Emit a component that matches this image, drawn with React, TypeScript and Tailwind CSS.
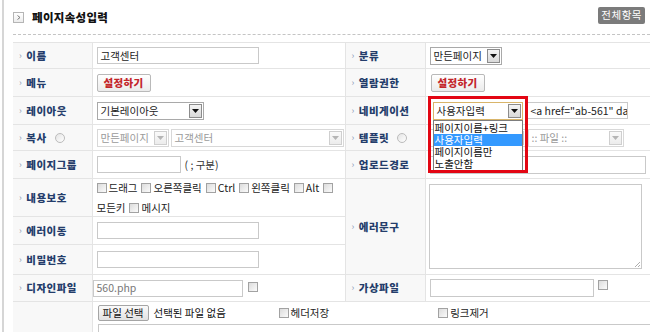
import React from "react";

const FONT = "font-['Noto_Sans_CJK_KR','Noto_Sans',sans-serif]";

function Label({
  children,
  extra,
  rowSpan,
}: {
  children?: React.ReactNode;
  extra?: React.ReactNode;
  rowSpan?: number;
}) {
  return (
    <td rowSpan={rowSpan} className="bg-[#f8f8f8] border-b border-r border-[#e4e4e4] pl-[6px] align-middle">
      {children ? (
        <div className="flex items-center text-[10.5px] leading-[14px] font-extrabold text-[#243d6b] tracking-[0.5px] whitespace-nowrap">
          <span className="text-[#8a98b5] text-[9px] mr-[4px] font-normal">›</span>
          {children}
          {extra}
        </div>
      ) : null}
    </td>
  );
}

function Value({ children, className }: { children?: React.ReactNode; className?: string }) {
  return (
    <td className={"border-b border-r border-[#e4e4e4] align-middle " + (className ?? "pl-[4px]")}>
      {children}
    </td>
  );
}

function Arrow({ disabled }: { disabled?: boolean }) {
  return (
    <span
      className={
        "shrink-0 w-[13px] h-[14px] mr-[1px] flex items-center justify-center border " +
        (disabled
          ? "border-[#cfcfcf] bg-gradient-to-b from-[#fafafa] to-[#ececec]"
          : "border-[#8c8c8c] bg-gradient-to-b from-[#f4f4f4] to-[#d9d9d9]")
      }
    >
      <svg width="7" height="4" viewBox="0 0 7 4">
        <path d="M0 0h7L3.5 4z" fill={disabled ? "#b5b5b5" : "#111"} />
      </svg>
    </span>
  );
}

function Select({
  text,
  className,
  disabled,
  focused,
}: {
  text: string;
  className: string;
  disabled?: boolean;
  focused?: boolean;
}) {
  return (
    <div
      className={
        "h-[18px] flex items-center bg-white border " +
        (focused ? "border-[#d9b56a] " : disabled ? "border-[#d8d8d8] " : "border-[#a9a9a9] ") +
        className
      }
    >
      <span
        className={
          "flex-1 pl-[3px] text-[10.5px] leading-[14px] whitespace-nowrap overflow-hidden " +
          (disabled ? "text-[#9a9a9a]" : "text-[#222]")
        }
      >
        {text}
      </span>
      <Arrow disabled={disabled} />
    </div>
  );
}

function Input({ className, text, gray }: { className: string; text?: string; gray?: boolean }) {
  return (
    <div
      className={
        "h-[17px] flex items-center bg-white border border-[#c9c9c9] pl-[3px] overflow-hidden whitespace-nowrap text-[10.5px] leading-[14px] " +
        (gray ? "text-[#777] " : "text-[#222] ") +
        className
      }
    >
      {text}
    </div>
  );
}

function Check() {
  return (
    <span className="block shrink-0 w-[10px] h-[10px] border border-[#a2a2a2] bg-gradient-to-br from-[#dcdcdc] to-[#fbfbfb]" />
  );
}

function Radio() {
  return (
    <span className="block shrink-0 w-[10px] h-[10px] rounded-full border border-[#bcbcbc] bg-gradient-to-br from-[#e4e4e4] to-[#ffffff] ml-[8px]" />
  );
}

function CheckItem({ text }: { text: string }) {
  return (
    <span className="inline-flex items-center gap-[2px] mr-[4px] text-[10.5px] leading-[14px] text-[#222] whitespace-nowrap">
      <Check />
      {text}
    </span>
  );
}

function SetButton() {
  return (
    <div className="w-[54px] h-[18px] flex items-center justify-center border border-[#b9b9b9] rounded-[2px] bg-gradient-to-b from-white to-[#ebebeb] text-[10.5px] leading-[14px] font-extrabold text-[#c3262b] tracking-[0.3px]">
      설정하기
    </div>
  );
}

export default function App() {
  return (
    <div className={"w-[650px] h-[332px] overflow-hidden bg-white flex " + FONT}>
      <div className="w-[2px] shrink-0 ml-[2px] bg-[#d6d6d6]" />
      <div className="flex-1 min-w-0 pl-[9px]">
        {/* header */}
        <div className="h-[35px] flex items-center justify-between border-b border-dashed border-[#c4c4c4] pr-[5px]">
          <div className="flex items-center gap-[8px] pt-[1px]">
            <span className="w-[11px] h-[11px] border border-[#b5b5b5] bg-gradient-to-b from-white to-[#ececec] flex items-center justify-center">
              <svg width="4" height="5" viewBox="0 0 4 5">
                <path d="M0.5 0.5L3 2.5L0.5 4.5" stroke="#777" strokeWidth="1" fill="none" />
              </svg>
            </span>
            <span className="text-[11.5px] font-extrabold text-[#111] tracking-[0.3px]">페이지속성입력</span>
          </div>
          <div className="h-[17px] px-[3px] mb-[4px] flex items-center bg-[#7b7b7b] rounded-[2px] text-[10.5px] leading-[14px] text-white tracking-[0.5px]">
            전체항목
          </div>
        </div>

        <table className="mt-[7px] border-collapse table-fixed w-[640px] border-t border-[#e4e4e4]">
          <colgroup>
            <col className="w-[79px]" />
            <col className="w-[253px]" />
            <col className="w-[80px]" />
            <col className="w-[228px]" />
          </colgroup>
          <tbody>
            <tr className="h-[26px]">
              <Label>이름</Label>
              <Value>
                <Input className="w-[162px]" text="고객센터" />
              </Value>
              <Label>분류</Label>
              <Value>
                <Select text="만든페이지" className="w-[72px]" />
              </Value>
            </tr>
            <tr className="h-[28px]">
              <Label>메뉴</Label>
              <Value>
                <SetButton />
              </Value>
              <Label>열람권한</Label>
              <Value className="pl-[5px]">
                <SetButton />
              </Value>
            </tr>
            <tr className="h-[28px]">
              <Label>레이아웃</Label>
              <Value>
                <Select text="기본레이아웃" className="w-[107px]" />
              </Value>
              <Label>네비게이션</Label>
              <Value className="pl-[2px]">
                <div className="flex items-center">
                  <div className="relative w-[100px] h-[22px] flex items-center justify-center">
                    <Select text="사용자입력" className="w-[90px]" focused />
                    {/* open list */}
                    <div className="absolute left-[5px] top-[20px] w-[90px] bg-white border border-[#7d7d7d] z-10 py-[1px]">
                      <div className="h-[12px] pl-[1px] text-[10.5px] leading-[12px] text-[#111] whitespace-nowrap">페이지이름+링크</div>
                      <div className="h-[12px] pl-[1px] text-[10.5px] leading-[12px] text-white bg-[#3399ff] whitespace-nowrap">사용자입력</div>
                      <div className="h-[12px] pl-[1px] text-[10.5px] leading-[12px] text-[#111] whitespace-nowrap">페이지이름만</div>
                      <div className="h-[12px] pl-[1px] text-[10.5px] leading-[12px] text-[#111] whitespace-nowrap">노출안함</div>
                    </div>
                    {/* red highlight */}
                    <div className="absolute left-0 top-[-4px] w-[100px] h-[77px] border-[3px] border-[#e30613] z-20 pointer-events-none" />
                  </div>
                  <Input className="w-[101px] ml-[-1px]" text={'<a href="ab-561" dat'} />
                </div>
              </Value>
            </tr>
            <tr className="h-[26px]">
              <Label extra={<Radio />}>복사</Label>
              <Value>
                <div className="flex items-center gap-[2px]">
                  <Select text="만든페이지" className="w-[72px]" disabled />
                  <Select text="고객센터" className="w-[173px]" disabled />
                </div>
              </Value>
              <Label extra={<Radio />}>템플릿</Label>
              <Value>
                <div className="flex items-center gap-[2px]">
                  <Select text="" className="w-[96px]" disabled />
                  <Select text=":: 파일 ::" className="w-[96px]" disabled />
                </div>
              </Value>
            </tr>
            <tr className="h-[28px]">
              <Label>페이지그룹</Label>
              <Value>
                <div className="flex items-center gap-[4px]">
                  <Input className="w-[84px]" />
                  <span className="text-[10.5px] text-[#333] leading-[14px]">( ; 구분)</span>
                </div>
              </Value>
              <Label>업로드경로</Label>
              <Value>
                <Input className="w-[216px] h-[18px]" />
              </Value>
            </tr>
            <tr className="h-[38px]">
              <Label>내용보호</Label>
              <Value>
                <div className="flex flex-wrap items-center gap-y-[3px]">
                  <CheckItem text="드래그" />
                  <CheckItem text="오른쪽클릭" />
                  <CheckItem text="Ctrl" />
                  <CheckItem text="왼쪽클릭" />
                  <CheckItem text="Alt" />
                  <Check />
                  <span className="w-full h-0" />
                  <span className="text-[10.5px] leading-[14px] text-[#222] mr-[4px]">모든키</span>
                  <CheckItem text="메시지" />
                </div>
              </Value>
              <Label rowSpan={3}>에러문구</Label>
              <td rowSpan={3} className="border-b border-[#e4e4e4] pl-[3px] align-middle">
                <div className="relative w-[213px] h-[85px] border border-[#c9c9c9] bg-white">
                  <svg className="absolute right-[1px] bottom-[1px]" width="6" height="6" viewBox="0 0 6 6">
                    <path d="M1 6L6 1M4 6L6 4" stroke="#999" strokeWidth="0.8" />
                  </svg>
                </div>
              </td>
            </tr>
            <tr className="h-[28px]">
              <Label>에러이동</Label>
              <Value>
                <Input className="w-[162px]" />
              </Value>
            </tr>
            <tr className="h-[30px]">
              <Label>비밀번호</Label>
              <Value>
                <Input className="w-[162px]" />
              </Value>
            </tr>
            <tr className="h-[27px]">
              <Label>디자인파일</Label>
              <Value className="pl-[0px]">
                <div className="flex items-start gap-[5px]">
                  <Input className="w-[150px] h-[16px]" text="560.php" gray />
                  <span className="mt-[2px] flex">
                    <Check />
                  </span>
                </div>
              </Value>
              <Label>가상파일</Label>
              <Value>
                <div className="flex items-start gap-[4px]">
                  <Input className="w-[164px] h-[18px]" />
                  <span className="mt-[1px] flex">
                    <Check />
                  </span>
                </div>
              </Value>
            </tr>
            <tr className="h-[40px]">
              <Label />
              <td colSpan={3} className="pl-[5px] pt-[3px] align-top">
                <div className="flex items-center h-[16px]">
                  <div className="h-[16px] px-[4px] flex items-center border border-[#a5a5a5] rounded-[2px] bg-gradient-to-b from-[#fafafa] to-[#e2e2e2] text-[10.5px] leading-[14px] text-[#111]">
                    파일 선택
                  </div>
                  <span className="ml-[5px] w-[125px] text-[10.5px] leading-[14px] text-[#111] whitespace-nowrap">선택된 파일 없음</span>
                  <CheckItem text="헤더저장" />
                  <span className="w-[105px]" />
                  <CheckItem text="링크제거" />
                </div>
                <div className="mt-[3px] h-[18px] w-[560px] border border-[#c9c9c9] bg-white" />
              </td>
            </tr>
          </tbody>
        </table>
      </div>
    </div>
  );
}
